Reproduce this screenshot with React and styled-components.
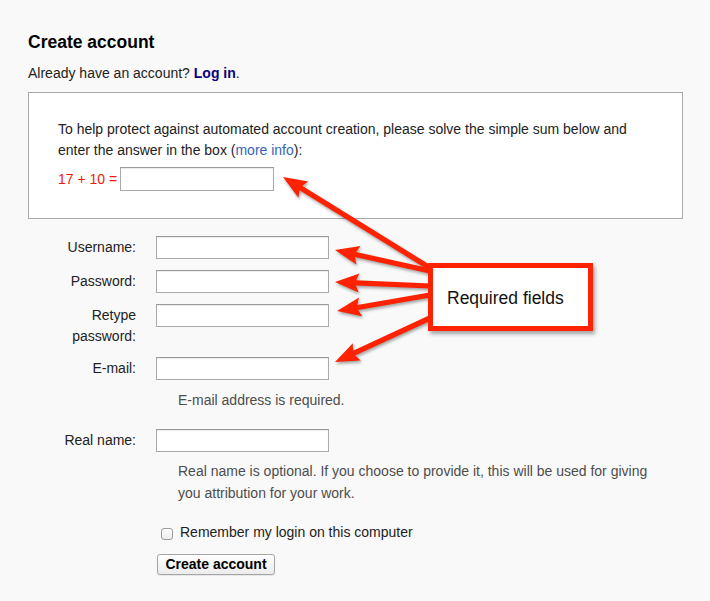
import React from "react";
import styled, { createGlobalStyle } from "styled-components";

const GlobalStyle = createGlobalStyle`
  html, body {
    margin: 0;
    padding: 0;
    background: #f9f9f9;
  }
  body {
    font-family: "Liberation Sans", Arial, Helvetica, sans-serif;
    font-size: 14px;
    color: #222;
  }
`;

const Page = styled.div`
  position: relative;
  width: 710px;
  min-height: 601px;
  padding: 31px 28px 0 28px;
  box-sizing: border-box;
`;

const Title = styled.h1`
  margin: 0;
  font-size: 17.5px;
  line-height: 22px;
  font-weight: 700;
  color: #000;
`;

const Intro = styled.p`
  margin: 9.5px 0 0;
  line-height: 21px;
  color: #222;
`;

const LoginLink = styled.a`
  color: #0b0080;
  font-weight: 700;
  text-decoration: none;
`;

const CaptchaBox = styled.div`
  margin-top: 8.5px;
  width: 655px;
  box-sizing: border-box;
  background: #fff;
  border: 1px solid #aaa;
  padding: 25.5px 29px 27px 29px;
`;

const CaptchaText = styled.p`
  margin: 0;
  line-height: 21px;
`;

const InfoLink = styled.a`
  color: #3366bb;
  text-decoration: none;
`;

const SumRow = styled.div`
  display: flex;
  align-items: center;
  gap: 3px;
  margin-top: 6px;
  color: #f01a0a;
`;

const TextInput = styled.input`
  box-sizing: border-box;
  width: ${({ $w }) => $w || 173}px;
  height: ${({ $h }) => $h || 23}px;
  margin: 0;
  padding: 2px 4px;
  border: 1px solid #aaa;
  border-top-color: #999;
  background: #fff;
  box-shadow: inset 0 1px 1px rgba(0, 0, 0, 0.08);
  font: inherit;
  outline: none;
`;

const Form = styled.div`
  margin-top: 17px;
`;

const FieldRow = styled.div`
  display: grid;
  grid-template-columns: 108px 173px;
  column-gap: 20px;
  align-items: start;
  margin-top: ${({ $mt }) => $mt ?? 11}px;
`;

const Label = styled.label`
  padding-top: 1px;
  text-align: right;
  line-height: 21px;
  color: #222;
`;

const Hint = styled.p`
  margin: ${({ $mt }) => $mt}px 0 0 150px;
  max-width: 480px;
  line-height: 22px;
  color: #4d4d4d;
`;

const CheckRow = styled.label`
  display: flex;
  align-items: center;
  margin: 18.5px 0 0 133px;
  line-height: 21px;
  color: #222;
`;

const Check = styled.input`
  appearance: none;
  box-sizing: border-box;
  width: 12px;
  height: 12px;
  margin: 2px 7px 0 0;
  border: 1px solid #9a9a9a;
  border-radius: 3px;
  background: linear-gradient(#fff, #ececec);
`;

const SubmitButton = styled.button`
  display: block;
  box-sizing: border-box;
  height: 21px;
  width: 118px;
  margin: 10.5px 0 0 129px;
  padding: 0;
  border: 1px solid #a5a5a5;
  border-radius: 3px;
  background: linear-gradient(#ffffff, #ececec);
  box-shadow: 0 1px 1px rgba(0, 0, 0, 0.08);
  font-family: inherit;
  font-size: 14px;
  font-weight: 700;
  color: #000;
  line-height: 19px;
`;

const Overlay = styled.svg`
  position: absolute;
  left: 0;
  top: 0;
  pointer-events: none;
  filter: drop-shadow(1px 2px 1.5px rgba(0, 0, 0, 0.35));
`;

const Callout = styled.div`
  position: absolute;
  left: 428px;
  top: 263px;
  width: 165px;
  height: 68px;
  box-sizing: border-box;
  display: flex;
  align-items: center;
  padding: 2px 0 0 14px;
  background: #fff;
  border: 5px solid #ff2200;
  box-shadow: 2px 3px 4px rgba(0, 0, 0, 0.35);
  font-size: 17.5px;
  color: #111;
`;

const arrows = [
  [430, 268, 283, 177],
  [430, 271, 335, 250],
  [430, 286, 335, 282],
  [430, 295, 337, 311],
  [430, 318, 335, 362],
];

// shaft + triangular head, as one polygon
function arrowPoints(x1, y1, x2, y2) {
  const shaft = 2.6;
  const headLen = 21;
  const headW = 9.5;
  const len = Math.hypot(x2 - x1, y2 - y1);
  const ux = (x2 - x1) / len;
  const uy = (y2 - y1) / len;
  const px = -uy;
  const py = ux;
  const bx = x2 - ux * headLen;
  const by = y2 - uy * headLen;
  const wx = bx - ux * 3;
  const wy = by - uy * 3;
  const pts = [
    [x1 + px * shaft, y1 + py * shaft],
    [bx + px * shaft, by + py * shaft],
    [wx + px * headW, wy + py * headW],
    [x2, y2],
    [wx - px * headW, wy - py * headW],
    [bx - px * shaft, by - py * shaft],
    [x1 - px * shaft, y1 - py * shaft],
  ];
  return pts.map((p) => p.map((n) => n.toFixed(1)).join(",")).join(" ");
}

const App = () => {
  return (
    <>
      <GlobalStyle />
      <Page>
        <Title>Create account</Title>
        <Intro>
          Already have an account? <LoginLink href="#">Log in</LoginLink>.
        </Intro>

        <CaptchaBox>
          <CaptchaText>
            To help protect against automated account creation, please solve the simple sum below and
            enter the answer in the box (<InfoLink href="#">more info</InfoLink>):
          </CaptchaText>
          <SumRow>
            17 + 10 =
            <TextInput $w={154} $h={24} />
          </SumRow>
        </CaptchaBox>

        <Form>
          <FieldRow $mt={0}>
            <Label>Username:</Label>
            <TextInput />
          </FieldRow>
          <FieldRow>
            <Label>Password:</Label>
            <TextInput type="password" />
          </FieldRow>
          <FieldRow>
            <Label>
              Retype
              <br />
              password:
            </Label>
            <TextInput type="password" />
          </FieldRow>
          <FieldRow $mt={10}>
            <Label>E-mail:</Label>
            <TextInput />
          </FieldRow>
          <Hint $mt={9}>E-mail address is required.</Hint>
          <FieldRow $mt={18}>
            <Label>Real name:</Label>
            <TextInput />
          </FieldRow>
          <Hint $mt={8}>
            Real name is optional. If you choose to provide it, this will be used for giving you
            attribution for your work.
          </Hint>
          <CheckRow>
            <Check type="checkbox" />
            Remember my login on this computer
          </CheckRow>
          <SubmitButton>Create account</SubmitButton>
        </Form>

        <Overlay width="710" height="601" viewBox="0 0 710 601">
          {arrows.map((a, i) => (
            <polygon key={i} points={arrowPoints(...a)} fill="#ff2200" />
          ))}
        </Overlay>
        <Callout>Required fields</Callout>
      </Page>
    </>
  );
};

export default App;
